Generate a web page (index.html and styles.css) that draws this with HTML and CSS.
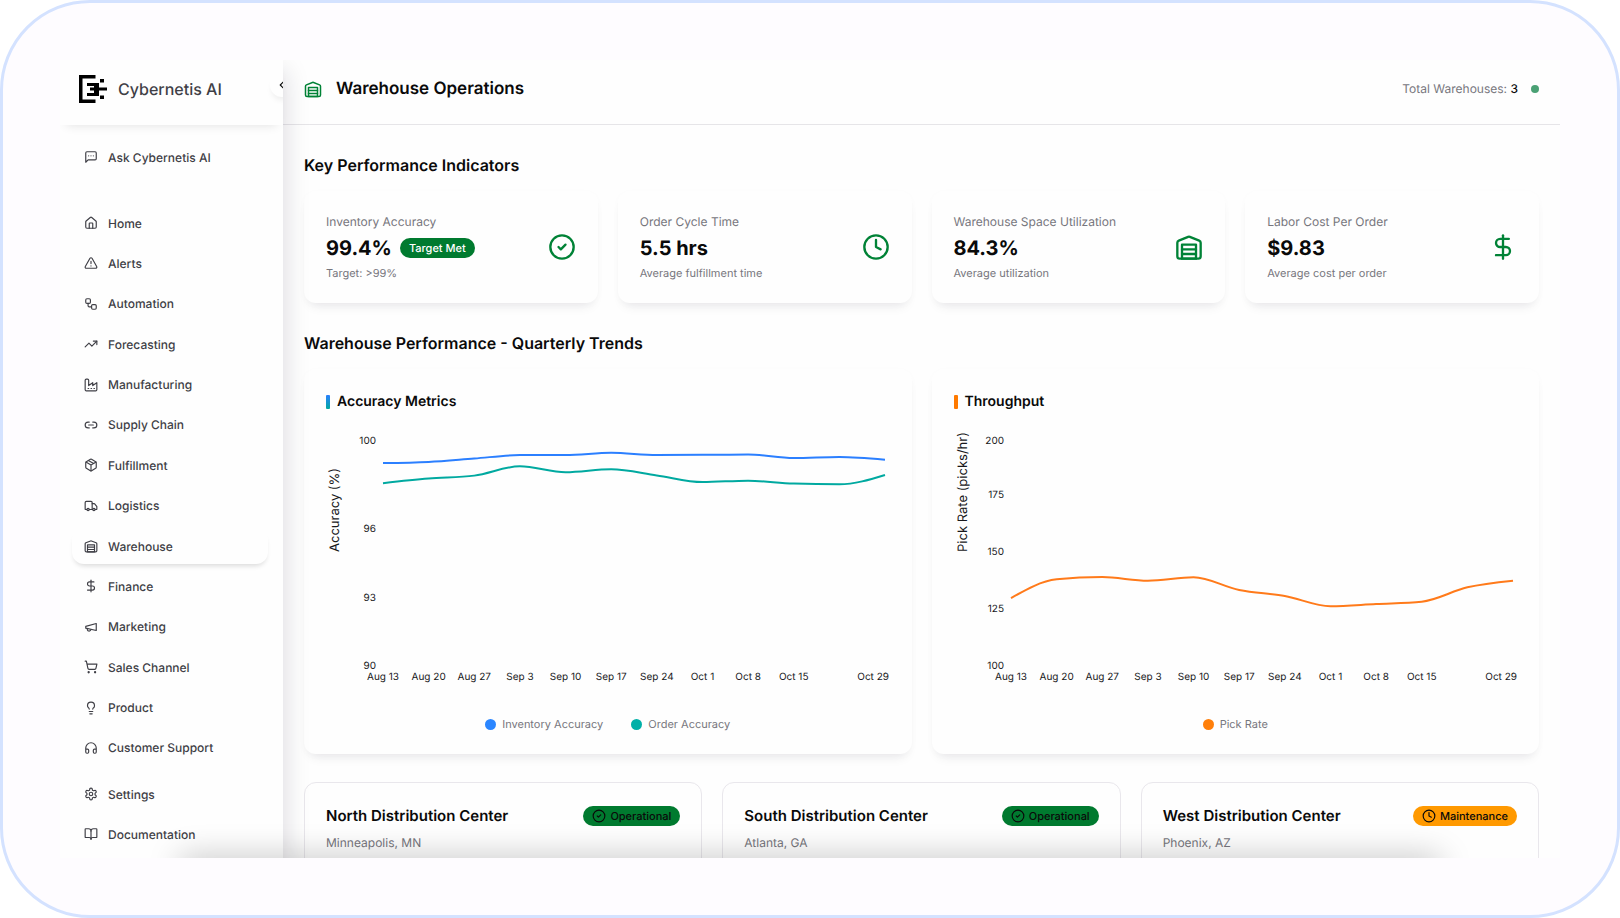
FILE: index.html
```html
<!DOCTYPE html>
<html lang="en">
<head>
    <meta charset="UTF-8">
    <title>Warehouse Operations</title>
    <link rel="stylesheet" href="styles.css">
</head>
<body>
    <!-- Icon sprite -->
    <svg class="sprite" aria-hidden="true">
        <symbol id="i-chat" viewBox="0 0 24 24"><path d="M21 15a2 2 0 0 1-2 2H7l-4 4V5a2 2 0 0 1 2-2h14a2 2 0 0 1 2 2z"/><path d="M8 10h.01M12 10h.01M16 10h.01"/></symbol>
        <symbol id="i-home" viewBox="0 0 24 24"><path d="M15 21v-8a1 1 0 0 0-1-1h-4a1 1 0 0 0-1 1v8"/><path d="M3 10a2 2 0 0 1 .709-1.528l7-5.999a2 2 0 0 1 2.582 0l7 5.999A2 2 0 0 1 21 10v9a2 2 0 0 1-2 2H5a2 2 0 0 1-2-2z"/></symbol>
        <symbol id="i-alert" viewBox="0 0 24 24"><path d="m21.73 18-8-14a2 2 0 0 0-3.48 0l-8 14A2 2 0 0 0 4 21h16a2 2 0 0 0 1.73-3"/><path d="M12 9v4M12 17h.01"/></symbol>
        <symbol id="i-workflow" viewBox="0 0 24 24"><rect width="8" height="8" x="3" y="3" rx="2"/><path d="M7 11v4a2 2 0 0 0 2 2h4"/><rect width="8" height="8" x="13" y="13" rx="2"/></symbol>
        <symbol id="i-trend" viewBox="0 0 24 24"><path d="M16 7h6v6"/><path d="m22 7-8.5 8.5-5-5L2 17"/></symbol>
        <symbol id="i-factory" viewBox="0 0 24 24"><path d="M2 20a2 2 0 0 0 2 2h16a2 2 0 0 0 2-2V8l-7 5V8l-7 5V4a2 2 0 0 0-2-2H4a2 2 0 0 0-2 2Z"/><path d="M17 18h1M12 18h1M7 18h1"/></symbol>
        <symbol id="i-link" viewBox="0 0 24 24"><path d="M9 17H7A5 5 0 0 1 7 7h2"/><path d="M15 7h2a5 5 0 1 1 0 10h-2"/><path d="M8 12h8"/></symbol>
        <symbol id="i-package" viewBox="0 0 24 24"><path d="m7.5 4.27 9 5.15"/><path d="M21 8a2 2 0 0 0-1-1.73l-7-4a2 2 0 0 0-2 0l-7 4A2 2 0 0 0 3 8v8a2 2 0 0 0 1 1.73l7 4a2 2 0 0 0 2 0l7-4A2 2 0 0 0 21 16Z"/><path d="m3.3 7 8.7 5 8.7-5M12 22V12"/></symbol>
        <symbol id="i-truck" viewBox="0 0 24 24"><path d="M14 18V6a2 2 0 0 0-2-2H4a2 2 0 0 0-2 2v11a1 1 0 0 0 1 1h2"/><path d="M15 18H9"/><path d="M19 18h2a1 1 0 0 0 1-1v-3.65a1 1 0 0 0-.22-.624l-3.48-4.35A1 1 0 0 0 17.52 8H14"/><circle cx="17" cy="18" r="2"/><circle cx="7" cy="18" r="2"/></symbol>
        <symbol id="i-warehouse" viewBox="0 0 24 24"><path d="M22 8.35V20a2 2 0 0 1-2 2H4a2 2 0 0 1-2-2V8.35A2 2 0 0 1 3.26 6.5l8-3.2a2 2 0 0 1 1.48 0l8 3.2A2 2 0 0 1 22 8.35Z"/><path d="M6 18h12M6 14h12"/><rect width="12" height="12" x="6" y="10"/></symbol>
        <symbol id="i-dollar" viewBox="0 0 24 24"><path d="M12 2v20"/><path d="M17 5H9.5a3.5 3.5 0 0 0 0 7h5a3.5 3.5 0 0 1 0 7H6"/></symbol>
        <symbol id="i-megaphone" viewBox="0 0 24 24"><path d="m3 11 18-5v12L3 14v-3z"/><path d="M11.6 16.8a3 3 0 1 1-5.8-1.6"/></symbol>
        <symbol id="i-cart" viewBox="0 0 24 24"><circle cx="8" cy="21" r="1"/><circle cx="19" cy="21" r="1"/><path d="M2.05 2.05h2l2.66 12.42a2 2 0 0 0 2 1.58h9.78a2 2 0 0 0 1.95-1.57l1.65-7.43H5.12"/></symbol>
        <symbol id="i-bulb" viewBox="0 0 24 24"><path d="M15 14c.2-1 .7-1.7 1.5-2.5 1-.9 1.5-2.2 1.5-3.5A6 6 0 0 0 6 8c0 1 .2 2.2 1.5 3.5.7.7 1.3 1.5 1.5 2.5"/><path d="M9 18h6M10 22h4"/></symbol>
        <symbol id="i-headphones" viewBox="0 0 24 24"><path d="M3 14h3a2 2 0 0 1 2 2v3a2 2 0 0 1-2 2H5a2 2 0 0 1-2-2v-7a9 9 0 0 1 18 0v7a2 2 0 0 1-2 2h-1a2 2 0 0 1-2-2v-3a2 2 0 0 1 2-2h3"/></symbol>
        <symbol id="i-settings" viewBox="0 0 24 24"><path d="M12.22 2h-.44a2 2 0 0 0-2 2v.18a2 2 0 0 1-1 1.73l-.43.25a2 2 0 0 1-2 0l-.15-.08a2 2 0 0 0-2.73.73l-.22.38a2 2 0 0 0 .73 2.73l.15.1a2 2 0 0 1 1 1.72v.51a2 2 0 0 1-1 1.74l-.15.09a2 2 0 0 0-.73 2.73l.22.38a2 2 0 0 0 2.73.73l.15-.08a2 2 0 0 1 2 0l.43.25a2 2 0 0 1 1 1.73V20a2 2 0 0 0 2 2h.44a2 2 0 0 0 2-2v-.18a2 2 0 0 1 1-1.73l.43-.25a2 2 0 0 1 2 0l.15.08a2 2 0 0 0 2.73-.73l.22-.39a2 2 0 0 0-.73-2.73l-.15-.08a2 2 0 0 1-1-1.74v-.5a2 2 0 0 1 1-1.74l.15-.09a2 2 0 0 0 .73-2.73l-.22-.38a2 2 0 0 0-2.73-.73l-.15.08a2 2 0 0 1-2 0l-.43-.25a2 2 0 0 1-1-1.73V4a2 2 0 0 0-2-2z"/><circle cx="12" cy="12" r="3"/></symbol>
        <symbol id="i-book" viewBox="0 0 24 24"><path d="M12 7v14"/><path d="M3 18a1 1 0 0 1-1-1V4a1 1 0 0 1 1-1h5a4 4 0 0 1 4 4 4 4 0 0 1 4-4h5a1 1 0 0 1 1 1v13a1 1 0 0 1-1 1h-6a3 3 0 0 0-3 3 3 3 0 0 0-3-3z"/></symbol>
        <symbol id="i-check" viewBox="0 0 24 24"><circle cx="12" cy="12" r="10"/><path d="m9 12 2 2 4-4"/></symbol>
        <symbol id="i-clock" viewBox="0 0 24 24"><circle cx="12" cy="12" r="10"/><path d="M12 6v6l4 2"/></symbol>
        <symbol id="i-chevron" viewBox="0 0 24 24"><path d="m15 18-6-6 6-6"/></symbol>
    </svg>

    <div class="frame">
        <div class="app">
            <aside class="sidebar">
                <div class="brand">
                    <svg class="brand-logo" viewBox="0 0 28 28" aria-hidden="true">
                        <path d="M0 0h16.500v3.500H3.500v21h13V28H0z"/>
                        <path d="M8 8h12v4.500h8v3h-8V21H8v-3h7v-2.500h-4v-3h4V11H8z"/>
                        <path d="M21 4h4v3.500h-4zM21 20.500h4V24h-4z"/>
                    </svg>
                    <span class="brand-name">Cybernetis AI</span>
                    <button type="button" class="collapse-btn" aria-label="Collapse sidebar">
                        <svg class="icon"><use href="#i-chevron"/></svg>
                    </button>
                </div>

                <div class="nav ask">
                    <a href="#" class="nav-item"><svg class="icon"><use href="#i-chat"/></svg>Ask Cybernetis AI</a>
                </div>

                <nav class="nav nav-main">
                    <a href="#" class="nav-item"><svg class="icon"><use href="#i-home"/></svg>Home</a>
                    <a href="#" class="nav-item"><svg class="icon"><use href="#i-alert"/></svg>Alerts</a>
                    <a href="#" class="nav-item"><svg class="icon"><use href="#i-workflow"/></svg>Automation</a>
                    <a href="#" class="nav-item"><svg class="icon"><use href="#i-trend"/></svg>Forecasting</a>
                    <a href="#" class="nav-item"><svg class="icon"><use href="#i-factory"/></svg>Manufacturing</a>
                    <a href="#" class="nav-item"><svg class="icon"><use href="#i-link"/></svg>Supply Chain</a>
                    <a href="#" class="nav-item"><svg class="icon"><use href="#i-package"/></svg>Fulfillment</a>
                    <a href="#" class="nav-item"><svg class="icon"><use href="#i-truck"/></svg>Logistics</a>
                    <a href="#" class="nav-item active" aria-current="page"><svg class="icon"><use href="#i-warehouse"/></svg>Warehouse</a>
                    <a href="#" class="nav-item"><svg class="icon"><use href="#i-dollar"/></svg>Finance</a>
                    <a href="#" class="nav-item"><svg class="icon"><use href="#i-megaphone"/></svg>Marketing</a>
                    <a href="#" class="nav-item"><svg class="icon"><use href="#i-cart"/></svg>Sales Channel</a>
                    <a href="#" class="nav-item"><svg class="icon"><use href="#i-bulb"/></svg>Product</a>
                    <a href="#" class="nav-item"><svg class="icon"><use href="#i-headphones"/></svg>Customer Support</a>
                </nav>

                <div class="nav nav-footer">
                    <a href="#" class="nav-item"><svg class="icon"><use href="#i-settings"/></svg>Settings</a>
                    <a href="#" class="nav-item"><svg class="icon"><use href="#i-book"/></svg>Documentation</a>
                </div>
            </aside>

            <main class="main">
                <header class="topbar">
                    <svg class="icon topbar-icon"><use href="#i-warehouse"/></svg>
                    <h1>Warehouse Operations</h1>
                    <p class="total">Total Warehouses: <strong>3</strong></p>
                    <span class="status-dot"></span>
                </header>

                <div class="content">
                    <section class="section">
                        <h2>Key Performance Indicators</h2>
                        <div class="grid kpi-grid">
                            <div class="card kpi">
                                <div class="kpi-text">
                                    <p class="kpi-label">Inventory Accuracy</p>
                                    <p class="kpi-value">99.4% <span class="badge badge-target">Target Met</span></p>
                                    <p class="kpi-note">Target: &gt;99%</p>
                                </div>
                                <svg class="icon kpi-icon"><use href="#i-check"/></svg>
                            </div>
                            <div class="card kpi">
                                <div class="kpi-text">
                                    <p class="kpi-label">Order Cycle Time</p>
                                    <p class="kpi-value">5.5 hrs</p>
                                    <p class="kpi-note">Average fulfillment time</p>
                                </div>
                                <svg class="icon kpi-icon"><use href="#i-clock"/></svg>
                            </div>
                            <div class="card kpi">
                                <div class="kpi-text">
                                    <p class="kpi-label">Warehouse Space Utilization</p>
                                    <p class="kpi-value">84.3%</p>
                                    <p class="kpi-note">Average utilization</p>
                                </div>
                                <svg class="icon kpi-icon"><use href="#i-warehouse"/></svg>
                            </div>
                            <div class="card kpi">
                                <div class="kpi-text">
                                    <p class="kpi-label">Labor Cost Per Order</p>
                                    <p class="kpi-value">$9.83</p>
                                    <p class="kpi-note">Average cost per order</p>
                                </div>
                                <svg class="icon kpi-icon"><use href="#i-dollar"/></svg>
                            </div>
                        </div>
                    </section>

                    <section class="section">
                        <h2>Warehouse Performance - Quarterly Trends</h2>
                        <div class="grid chart-grid">
                            <div class="card">
                                <h3 class="chart-title accuracy">Accuracy Metrics</h3>
                                <svg class="chart" id="accuracy-chart"></svg>
                                <div class="legend">
                                    <span class="legend-item blue">Inventory Accuracy</span>
                                    <span class="legend-item teal">Order Accuracy</span>
                                </div>
                            </div>
                            <div class="card">
                                <h3 class="chart-title throughput">Throughput</h3>
                                <svg class="chart" id="throughput-chart"></svg>
                                <div class="legend">
                                    <span class="legend-item orange">Pick Rate</span>
                                </div>
                            </div>
                        </div>
                    </section>

                    <section class="grid center-grid">
                        <article class="center">
                            <div class="center-head">
                                <h3>North Distribution Center</h3>
                                <span class="badge badge-ok"><svg class="icon"><use href="#i-check"/></svg>Operational</span>
                            </div>
                            <p>Minneapolis, MN</p>
                        </article>
                        <article class="center">
                            <div class="center-head">
                                <h3>South Distribution Center</h3>
                                <span class="badge badge-ok"><svg class="icon"><use href="#i-check"/></svg>Operational</span>
                            </div>
                            <p>Atlanta, GA</p>
                        </article>
                        <article class="center">
                            <div class="center-head">
                                <h3>West Distribution Center</h3>
                                <span class="badge badge-warn"><svg class="icon"><use href="#i-clock"/></svg>Maintenance</span>
                            </div>
                            <p>Phoenix, AZ</p>
                        </article>
                    </section>
                </div>
            </main>
        </div>
    </div>

    <script src="charts.js"></script>
</body>
</html>
```
FILE: styles.css
```css
* {
    box-sizing: border-box;
}
body {
    margin: 0;
    background: #ffffff;
    color: #0a0a0a;
    font-family: Inter, "Liberation Sans", sans-serif;
    font-size: 12px;
    text-rendering: geometricPrecision;
}
h1, h2, h3, p {
    margin: 0;
}
a {
    color: inherit;
    text-decoration: none;
}
.sprite {
    display: none;
}
.icon {
    width: 14px;
    height: 14px;
    flex: none;
    fill: none;
    stroke: currentColor;
    stroke-width: 2;
    stroke-linecap: round;
    stroke-linejoin: round;
}

/* Outer frame */
.frame {
    height: 100vh;
    padding: 57px;
    border: 3px solid #d4e2ff;
    border-radius: 90px;
    background: #fefcff;
}
.app {
    position: relative;
    display: flex;
    height: 100%;
    overflow: hidden;
    background: #fefefe;
}
/* soft shade along the bottom edge */
.app::after {
    content: "";
    position: absolute;
    z-index: 2;
    top: 100%;
    left: 120px;
    right: 120px;
    height: 20px;
    box-shadow: 0 0 32px rgba(0, 0, 0, 0.28);
}

/* Sidebar */
.sidebar {
    position: relative;
    z-index: 1;
    display: flex;
    flex-direction: column;
    width: 223px;
    flex: none;
    background: #fefefe;
    box-shadow: 2px 10px 24px rgba(20, 10, 40, 0.14);
    color: #3f3f46;
}
.brand {
    position: relative;
    display: flex;
    align-items: center;
    gap: 11px;
    height: 65px;
    padding: 0 19px 8px;
    overflow: hidden;
    box-shadow: 0 6px 10px -6px rgba(0, 0, 0, 0.12);
}
.brand-logo {
    width: 28px;
    height: 28px;
    fill: #000000;
}
.brand-name {
    font-size: 16px;
    font-weight: 500;
}
.collapse-btn {
    position: absolute;
    top: 13px;
    right: -11px;
    display: flex;
    align-items: center;
    justify-content: center;
    width: 24px;
    height: 24px;
    padding: 0;
    border: none;
    border-radius: 50%;
    background: #fefefe;
    box-shadow: 0 5px 6px -2px rgba(0, 0, 0, 0.07);
    color: #0a0a0a;
}
.collapse-btn .icon {
    width: 14px;
    height: 14px;
}
.nav {
    display: flex;
    flex-direction: column;
    padding: 0 15px 0 12px;
}
.ask {
    padding-top: 14px;
}
.nav-main {
    flex: 1;
    justify-content: space-between;
    margin-top: 30px;
}
.nav-footer {
    gap: 4px;
    margin-top: 10px;
    padding-bottom: 6px;
}
.nav-item {
    display: flex;
    align-items: center;
    gap: 10px;
    height: 36px;
    padding: 0 12px;
    border-radius: 12px;
    font-weight: 500;
}
.nav-item.active {
    box-shadow: 0 4px 5px -2px rgba(0, 0, 0, 0.14);
}

/* Main area */
.main {
    flex: 1;
    min-width: 0;
}
.topbar {
    display: flex;
    align-items: center;
    height: 65px;
    padding: 0 21px 7px;
    border-bottom: 1px solid #e6e5e8;
}
.topbar-icon {
    width: 18px;
    height: 18px;
    margin-right: 14px;
    color: #008236;
}
h1 {
    flex: 1;
    font-size: 17px;
    font-weight: 600;
}
.total {
    color: #77767d;
}
.total strong {
    color: #0a0a0a;
    font-weight: 500;
}
.status-dot {
    width: 8px;
    height: 8px;
    margin-left: 13px;
    border-radius: 50%;
    background: #4aa174;
}
.content {
    display: flex;
    flex-direction: column;
    gap: 28px;
    padding: 28px 21px;
}
h2 {
    margin-bottom: 14px;
    font-size: 16px;
    font-weight: 600;
    line-height: 24px;
}
.grid {
    display: grid;
    gap: 20px;
}
.kpi-grid {
    grid-template-columns: repeat(4, 1fr);
}
.chart-grid {
    grid-template-columns: repeat(2, 1fr);
}
.center-grid {
    grid-template-columns: repeat(3, 1fr);
}
.card {
    padding: 22px;
    border-radius: 12px;
    background: #fefefe;
    box-shadow: 0 8px 12px -6px rgba(20, 10, 40, 0.1), 0 2px 8px rgba(20, 10, 40, 0.02);
}

/* KPI cards */
.kpi {
    display: flex;
    align-items: center;
    justify-content: space-between;
}
.kpi-text {
    display: flex;
    flex-direction: column;
    gap: 3px;
}
.kpi-label {
    color: #77767d;
    line-height: 18px;
}
.kpi-value {
    display: flex;
    align-items: center;
    gap: 8px;
    font-size: 20px;
    font-weight: 700;
    line-height: 28px;
}
.kpi-note {
    color: #77767d;
    font-size: 11px;
    line-height: 16px;
}
.kpi-icon {
    width: 28px;
    height: 28px;
    color: #008236;
}
.badge {
    display: inline-flex;
    align-items: center;
    gap: 4px;
    height: 20px;
    padding: 0 9px;
    border-radius: 10px;
    font-size: 11px;
    font-weight: 500;
    line-height: 20px;
}
.badge .icon {
    width: 14px;
    height: 14px;
}
.badge-target {
    background: #007a2f;
    color: #ffffff;
}
.badge-ok {
    background: #007a2f;
}
.badge-warn {
    background: #ff9900;
}

/* Charts */
.chart-title {
    display: flex;
    align-items: center;
    gap: 7px;
    font-size: 14px;
    font-weight: 600;
    line-height: 22px;
}
.chart-title::before {
    content: "";
    width: 4px;
    height: 14px;
    border-radius: 1px;
}
.chart-title.accuracy::before {
    background: linear-gradient(#2b7fff, #00a9a0);
}
.chart-title.throughput::before {
    background: #ff7a00;
}
.chart {
    display: block;
    width: 100%;
    height: 269px;
    margin-top: 10px;
    overflow: visible;
}
.chart text {
    fill: #18181b;
    font-size: 10px;
}
.chart .axis-title {
    font-size: 13px;
}
.chart .line {
    fill: none;
    stroke-width: 2;
}
.legend {
    display: flex;
    justify-content: center;
    gap: 28px;
    margin-top: 24px;
    color: #77767d;
    font-size: 11px;
    line-height: 16px;
}
.legend-item {
    display: flex;
    align-items: center;
    gap: 6px;
}
.legend-item::before {
    content: "";
    width: 11px;
    height: 11px;
    border-radius: 50%;
}
.legend-item.blue::before {
    background: #2b86ff;
}
.legend-item.teal::before {
    background: #00b0a8;
}
.legend-item.orange::before {
    background: #ff7f0a;
}

/* Distribution centers */
.center {
    min-height: 200px;
    padding: 21px;
    border: 1px solid #e9e7ec;
    border-radius: 12px;
}
.center-head {
    display: flex;
    align-items: center;
    justify-content: space-between;
    margin-bottom: 6px;
}
.center-head h3 {
    font-size: 15px;
    font-weight: 600;
    line-height: 24px;
}
.center p {
    color: #77767d;
    line-height: 18px;
}
```
FILE: charts.js
```js
const SVG_NS = 'http://www.w3.org/2000/svg';
const labels = ['Aug 13', 'Aug 20', 'Aug 27', 'Sep 3', 'Sep 10', 'Sep 17', 'Sep 24', 'Oct 1', 'Oct 8', 'Oct 15', '', 'Oct 29'];
const plot = { left: 57, right: 5, top: 15, bottom: 243 };

function add(svg, tag, attrs, text) {
    const el = document.createElementNS(SVG_NS, tag);
    for (const key in attrs) {
        el.setAttribute(key, attrs[key]);
    }
    if (text) {
        el.textContent = text;
    }
    svg.appendChild(el);
}

// Monotone cubic curve through evenly spaced points
function curve(points) {
    const n = points.length;
    const h = points[1][0] - points[0][0];
    const slopes = [];
    for (let i = 0; i < n - 1; i++) {
        slopes.push((points[i + 1][1] - points[i][1]) / h);
    }
    const t = [];
    for (let i = 1; i < n - 1; i++) {
        const a = slopes[i - 1];
        const b = slopes[i];
        t[i] = a * b <= 0 ? 0 : Math.sign(a) * Math.min(Math.abs(a), Math.abs(b), Math.abs(a + b) / 4) * 2;
    }
    t[0] = (3 * slopes[0] - t[1]) / 2;
    t[n - 1] = (3 * slopes[n - 2] - t[n - 2]) / 2;

    let d = `M${points[0]}`;
    for (let i = 0; i < n - 1; i++) {
        const [x0, y0] = points[i];
        const [x1, y1] = points[i + 1];
        d += `C${x0 + h / 3},${y0 + t[i] * h / 3},${x1 - h / 3},${y1 - t[i + 1] * h / 3},${x1},${y1}`;
    }
    return d;
}

function drawChart(id, options) {
    const svg = document.getElementById(id);
    const width = svg.clientWidth;
    const step = (width - plot.left - plot.right) / (labels.length - 1);
    const y = value => plot.bottom - (value - options.min) / (options.max - options.min) * (plot.bottom - plot.top);

    svg.replaceChildren();
    options.ticks.forEach(tick => {
        // keep the top label inside the chart
        const ty = Math.max(y(tick), plot.top + 3);
        add(svg, 'text', { x: 50, y: ty + 3, 'text-anchor': 'end' }, String(tick));
    });
    labels.forEach((label, i) => {
        const last = i === labels.length - 1;
        add(svg, 'text', {
            x: last ? width - 1 : plot.left + i * step,
            y: 257,
            'text-anchor': last ? 'end' : 'middle'
        }, label);
    });
    add(svg, 'text', { class: 'axis-title', transform: 'translate(13 129) rotate(-90)' }, options.title);
    options.series.forEach(s => {
        const points = s.values.map((v, i) => [plot.left + i * step, y(v)]);
        add(svg, 'path', { class: 'line', stroke: s.color, d: curve(points) });
    });
}

function drawAll() {
    drawChart('accuracy-chart', {
        title: 'Accuracy (%)',
        min: 90,
        max: 100,
        ticks: [90, 93, 96, 100],
        series: [
            { color: '#2b7fff', values: [98.9, 98.95, 99.1, 99.25, 99.25, 99.35, 99.25, 99.26, 99.28, 99.12, 99.17, 99.05] },
            { color: '#00a9a0', values: [98.02, 98.22, 98.35, 98.76, 98.5, 98.63, 98.36, 98.07, 98.13, 98, 97.97, 98.38] }
        ]
    });
    drawChart('throughput-chart', {
        title: 'Pick Rate (picks/hr)',
        min: 100,
        max: 200,
        ticks: [100, 125, 150, 175, 200],
        series: [
            { color: '#ff7a1a', values: [129.8, 138, 139, 137.4, 138.9, 133.3, 130.7, 126.2, 127.2, 128.2, 134.5, 137.4] }
        ]
    });
}

drawAll();
window.addEventListener('resize', drawAll);
```
